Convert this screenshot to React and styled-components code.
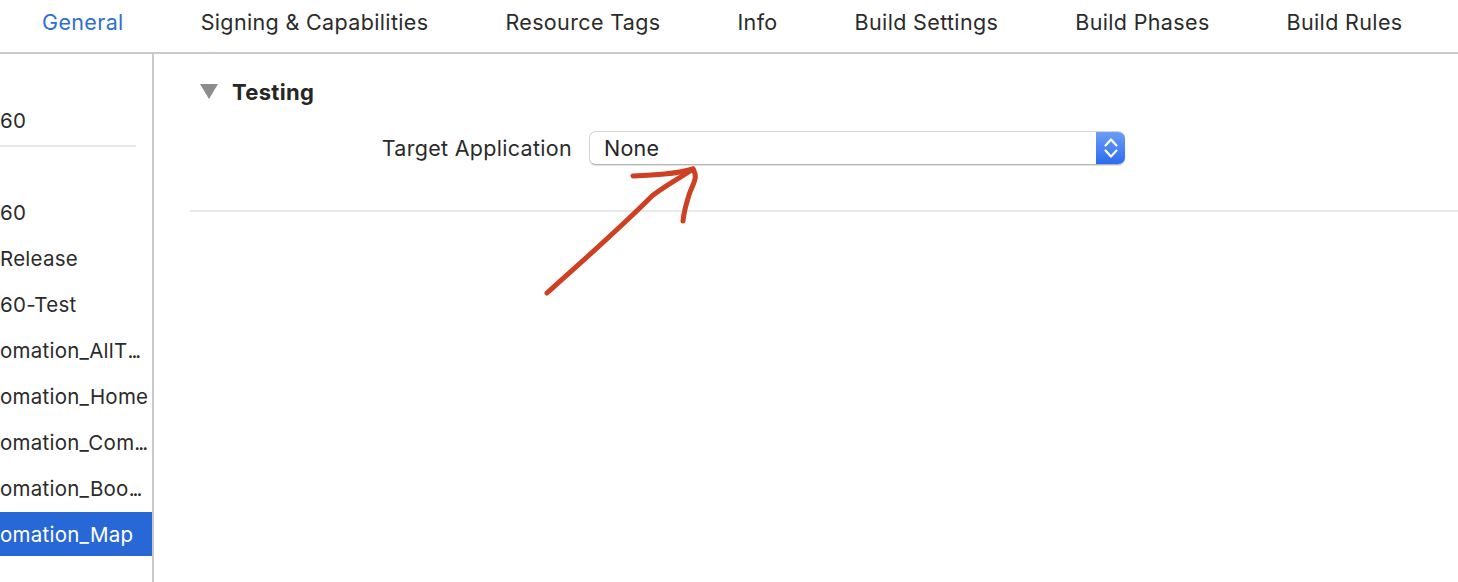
import React from "react";
import styled, { createGlobalStyle } from "styled-components";

const Global = createGlobalStyle`
  html, body { margin: 0; padding: 0; background: #fff; }
  body { font-family: Inter, "Noto Sans", sans-serif; color: #262626; overflow: hidden; }
`;
const Page = styled.div`
  position: relative; width: 1458px; height: 582px; overflow: hidden; background: #fff;
  display: flex; flex-direction: column;
`;
const TabBar = styled.nav`
  flex: none; border-bottom: 2px solid #c9c9c9; box-sizing: border-box; height: 54px;
  display: flex; align-items: center; gap: 77px; padding: 0 0 8px 42px;
`;
const Tab = styled.span`
  font-size: 21.5px; white-space: nowrap; letter-spacing: 0.35px; color: ${p => (p.$active ? "#2f6fd0" : "#2b2b2b")};
`;
const Body = styled.div`flex: 1; display: flex; min-height: 0;`;
const Sidebar = styled.aside`
  width: 152px; flex: none; border-right: 2px solid #c9c9c9; overflow: hidden; padding-top: 44px;
  display: flex; flex-direction: column;
`;
const Row = styled.div`
  height: 44px; margin-bottom: 2px; flex: none; display: flex; align-items: center; white-space: nowrap;
  font-size: 20.5px; letter-spacing: 0.25px; padding-left: ${p => p.$inset}px;
  background: ${p => (p.$selected ? "#2767d6" : "transparent")};
  color: ${p => (p.$selected ? "#fff" : "#2b2b2b")};
`;
const Dots = styled.span`letter-spacing: -2px;`;
const SideDivider = styled.div`height: 2px; width: 136px; background: #e6e6e6; margin: 1px 0 43px; flex: none;`;
const Main = styled.main`flex: 1; padding: 0 0 0 36px; min-width: 0;`;
const SectionHead = styled.div`display: flex; align-items: center; gap: 14px; height: 34px; margin-top: 21px; padding-left: 10px;`;
const SectionTitle = styled.h2`margin: 0; font-size: 22px; font-weight: 700; color: #262626; letter-spacing: 0.3px;`;
const Field = styled.div`display: flex; align-items: center; margin-top: 21px; height: 36px;`;
const Label = styled.label`width: 399px; padding-right: 17px; box-sizing: border-box; text-align: right; font-size: 21.5px; white-space: nowrap; color: #2b2b2b; letter-spacing: 0.3px;`;
const Select = styled.div`
  width: 536px; height: 34px; box-sizing: border-box; display: flex; align-items: stretch; border-radius: 7px;
  border: 1px solid #d4d4d4; border-bottom-color: #b4b4b4; border-right: 0; overflow: hidden; background: #fff;
  box-shadow: 0 1px 1px rgba(0,0,0,.12);
`;
const SelectValue = styled.span`flex: 1; padding-left: 14px; line-height: 33px; font-size: 21.5px; letter-spacing: 0.2px; color: #262626;`;
const Stepper = styled.span`
  width: 29px; flex: none; margin-top: -1px; margin-bottom: -1px; display: flex; align-items: center; justify-content: center;
  background: linear-gradient(#6d9ff5, #2a6af0);
`;
const SectionRule = styled.div`height: 2px; background: #e8e8e8; margin-top: 44px;`;
const Arrow = styled.svg`position: absolute; left: 530px; top: 150px; pointer-events: none;`;

const rows = [{ t: "60", i: -15 }];
const lower = [
  { t: "60", i: -15 },
  { t: "Release", i: -2 },
  { t: "60-Test", i: -14 },
  { t: "omation_AllT", i: -3, more: true },
  { t: "omation_Home", i: -3 },
  { t: "omation_Com", i: -3, more: true },
  { t: "omation_Boo", i: -3, more: true },
  { t: "omation_Map", i: -3, s: true },
];
const tabs = ["Signing & Capabilities", "Resource Tags", "Info", "Build Settings", "Build Phases", "Build Rules"];

export default function App() {
  return (
    <Page>
      <Global />
      <TabBar>
        <Tab $active>General</Tab>
        {tabs.map(t => <Tab key={t}>{t}</Tab>)}
      </TabBar>
      <Body>
        <Sidebar>
          {rows.map(r => <Row key={r.t} $inset={r.i}>{r.t}</Row>)}
          <SideDivider />
          {lower.map((r, i) => (
            <Row key={i} $inset={r.i} $selected={r.s}>
              <span>{r.t}{r.more && <Dots>...</Dots>}</span>
            </Row>
          ))}
        </Sidebar>
        <Main>
          <SectionHead>
            <svg width="18" height="16" viewBox="0 0 18 16"><path d="M0 0H18L9 15Z" fill="#8c8c8c" /></svg>
            <SectionTitle>Testing</SectionTitle>
          </SectionHead>
          <Field>
            <Label>Target Application</Label>
            <Select>
              <SelectValue>None</SelectValue>
              <Stepper>
                <svg width="16" height="24" viewBox="0 0 16 24" fill="none" stroke="#fff" strokeWidth="2.2" strokeLinecap="round" strokeLinejoin="round">
                  <path d="M2.5 9.5 8 3.5 13.5 9.5" /><path d="M2.5 14.5 8 20.5 13.5 14.5" />
                </svg>
              </Stepper>
            </Select>
          </Field>
          <SectionRule />
        </Main>
      </Body>
      <Arrow width="200" height="160" viewBox="0 0 200 160" fill="none" stroke="#cf3f22" strokeWidth="5" strokeLinecap="round" strokeLinejoin="round">
        <path d="M17 143C50 113 85 83 122 46C135 36 150 28 163 19" />
        <path d="M103 26C125 25 145 24 163 19C168 27 164 32 160 42C157 51 154 60 153 71" />
      </Arrow>
    </Page>
  );
}
